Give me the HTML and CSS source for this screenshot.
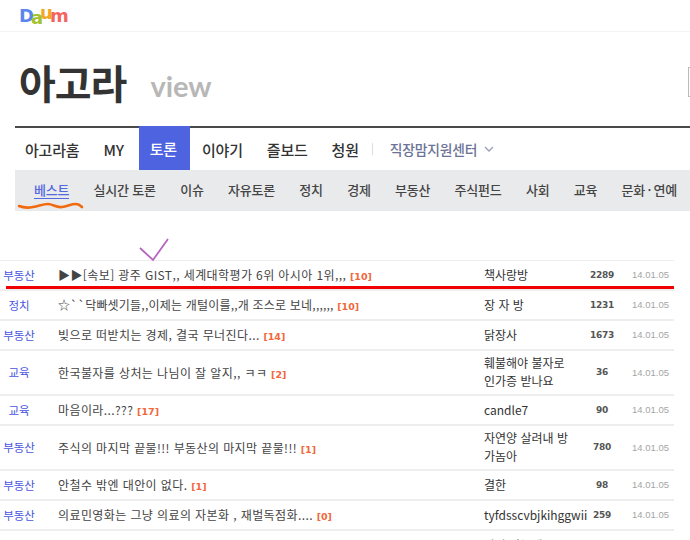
FILE: index.html
```html
<!DOCTYPE html>
<html lang="ko">
<head>
<meta charset="utf-8">
<title>아고라</title>
<link rel="stylesheet" href="styles.css">
</head>
<body>
<div class="page">
  <header class="topbar">
    <div class="logo"><span class="l-d">D</span><span class="l-a">a</span><span class="l-u">u</span><span class="l-m">m</span></div>
  </header>
  <div class="brand">
    <h1>아고라</h1>
    <span class="view">view</span>
    <span class="searchbox"></span>
  </div>
  <nav class="mainnav">
    <a>아고라홈</a><a>MY</a><a class="active">토론</a><a>이야기</a><a>즐보드</a><a>청원</a>
    <span class="sep"></span>
    <a class="center">직장맘지원센터<svg class="chev" width="10" height="6" viewBox="0 0 10 6"><path d="M1 1l4 4 4-4" fill="none" stroke="#9aa0b8" stroke-width="1.3"/></svg></a>
  </nav>
  <nav class="subnav">
    <a class="on">베스트</a><a>실시간 토론</a><a>이슈</a><a>자유토론</a><a>정치</a><a>경제</a><a>부동산</a><a>주식펀드</a><a>사회</a><a>교육</a><a>문화&thinsp;·&thinsp;연예</a>
  </nav>
  <div class="list">
    <div class="row"><span class="cat">부동산</span><span class="ttl">▶▶[속보] 광주 GIST,, 세계대학평가 6위 아시아 1위,,, <b>[10]</b></span><span class="who">책사랑방</span><span class="cnt">2289</span><span class="dt">14.01.05</span></div>
    <div class="row"><span class="cat">정치</span><span class="ttl tight">☆``닥빠셋기들,,이제는 개털이를,,개 조스로 보네,,,,,, <b>[10]</b></span><span class="who">장 자 방</span><span class="cnt">1231</span><span class="dt">14.01.05</span></div>
    <div class="row"><span class="cat">부동산</span><span class="ttl">빚으로 떠받치는 경제, 결국 무너진다... <b>[14]</b></span><span class="who">닭장사</span><span class="cnt">1673</span><span class="dt">14.01.05</span></div>
    <div class="row tall"><span class="cat">교육</span><span class="ttl">한국불자를 상처는 나님이 잘 알지,, ㅋㅋ <b>[2]</b></span><span class="who">훼불해야 불자로 인가증 받나요</span><span class="cnt">36</span><span class="dt">14.01.05</span></div>
    <div class="row"><span class="cat">교육</span><span class="ttl">마음이라...??? <b>[17]</b></span><span class="who">candle7</span><span class="cnt">90</span><span class="dt">14.01.05</span></div>
    <div class="row tall"><span class="cat">부동산</span><span class="ttl">주식의 마지막 끝물!!! 부동산의 마지막 끝물!!! <b>[1]</b></span><span class="who">자연양 살려내 방가놈아</span><span class="cnt">780</span><span class="dt">14.01.05</span></div>
    <div class="row"><span class="cat">부동산</span><span class="ttl">안철수 밖엔 대안이 없다. <b>[1]</b></span><span class="who">결한</span><span class="cnt">98</span><span class="dt">14.01.05</span></div>
    <div class="row"><span class="cat">부동산</span><span class="ttl">의료민영화는 그냥 의료의 자본화 , 재벌독점화.... <b>[0]</b></span><span class="who">tyfdsscvbjkihggwii</span><span class="cnt">259</span><span class="dt">14.01.05</span></div>
    <div class="row"><span class="cat"></span><span class="ttl"></span><span class="who faint">바람 가는대로</span><span class="cnt"></span><span class="dt"></span></div>
  </div>
  <svg class="marks" width="690" height="540" viewBox="0 0 690 540">
    <path d="M19 206c5 2 9 2 14 1 6-1 10-3 15-3 5 0 8 4 14 3 6-1 9-3 14-3 3 0 5 2 6 3" fill="none" stroke="#f26a10" stroke-width="2.6" stroke-linecap="round"/>
    <path d="M140 248l13 12 15-21" fill="none" stroke="#b565c0" stroke-width="1.8"/>
    <rect x="6" y="286" width="668" height="3" fill="#f00000"/>
  </svg>
</div>
</body>
</html>
```
FILE: styles.css
```css
* { box-sizing: border-box; }
html, body { margin: 0; padding: 0; background: #fff; }
body { font-family: "Noto Sans CJK KR", "Liberation Sans", sans-serif; color: #333; }
.page { position: relative; width: 690px; height: 540px; overflow: hidden; }
.topbar { height: 32px; padding: 5px 0 0 19px; border-bottom: 1px solid #f3f3f3; }
.logo { font-family: "DejaVu Sans", sans-serif; font-weight: 700; font-size: 18px; line-height: 22px; letter-spacing: -3px; display: flex; }
.l-d { color: #5b86ee; }
.l-a { color: #a3c22d; transform: translateY(2px); }
.l-u { color: #f5a623; transform: translateY(-3px); }
.l-m { color: #f4645f; }
.brand { height: 94px; display: flex; align-items: center; padding: 6px 0 0 19px; }
.brand h1 { margin: 0; font-size: 40px; font-weight: 700; line-height: 50px; letter-spacing: -1px; color: #333; }
.view { margin-left: 24px; font-family: "Lato", sans-serif; font-weight: 700; font-size: 29px; color: #b7b7b7; position: relative; top: 3px; }
.searchbox { margin-left: auto; width: 2px; height: 30px; border: 1px solid #bbb; border-right: 0; }
.mainnav { margin-left: 15px; height: 44px; border-top: 2px solid #4a4a4a; display: flex; align-items: center; gap: 24px; padding-left: 10px; font-size: 15px; font-weight: 500; letter-spacing: -0.2px; color: #333; }
.mainnav a { display: flex; align-items: center; }
.mainnav .active { background: #4d63e0; color: #fff; align-self: stretch; padding: 0 13px 0 11px; margin: -2px -12px 0 -9px; }
.sep { width: 1px; height: 12px; background: #ddd; margin: 0 -7px 0 -11px; }
.mainnav .center { color: #6b7396; font-size: 13.800px; gap: 7px; }
.subnav { margin-left: 15px; height: 41px; background: #e9eaec; display: flex; align-items: center; gap: 24.300px; padding: 0 0 2px 19px; font-size: 13px; font-weight: 500; letter-spacing: -0.2px; color: #444; white-space: nowrap; }
.subnav .on { color: #5468e0; border-bottom: 1px solid #5468e0; line-height: 17px; margin-top: 1px; }
.list { margin-top: 49px; width: 674px; border-top: 1px solid #eee; font-size: 12px; }
.row { display: grid; grid-template-columns: 38px 446px 104px 28px 58px; height: 30px; align-items: center; border-bottom: 2px solid #eeeeee; padding-bottom: 1px; }
.row.tall { height: 45px; }
.cat { text-align: center; color: #4a55e0; font-size: 11.500px; }
.ttl { padding-left: 20px; white-space: nowrap; color: #444; letter-spacing: 0.4px; }
.ttl.tight { letter-spacing: 0.2px; }
.ttl b { color: #f0683c; font-family: "DejaVu Sans", sans-serif; font-size: 9.500px; font-weight: 700; letter-spacing: 0; }
.who { line-height: 18px; color: #333; padding-right: 14px; }
.cnt { text-align: center; font-family: "DejaVu Sans", sans-serif; font-weight: 700; font-size: 9px; letter-spacing: -0.3px; color: #555; white-space: nowrap; }
.dt { font-family: "Liberation Sans", sans-serif; font-size: 9.500px; color: #a5a5a5; padding-left: 16px; }
.faint { color: #888; }
.marks { position: absolute; left: 0; top: 0; pointer-events: none; }
```
